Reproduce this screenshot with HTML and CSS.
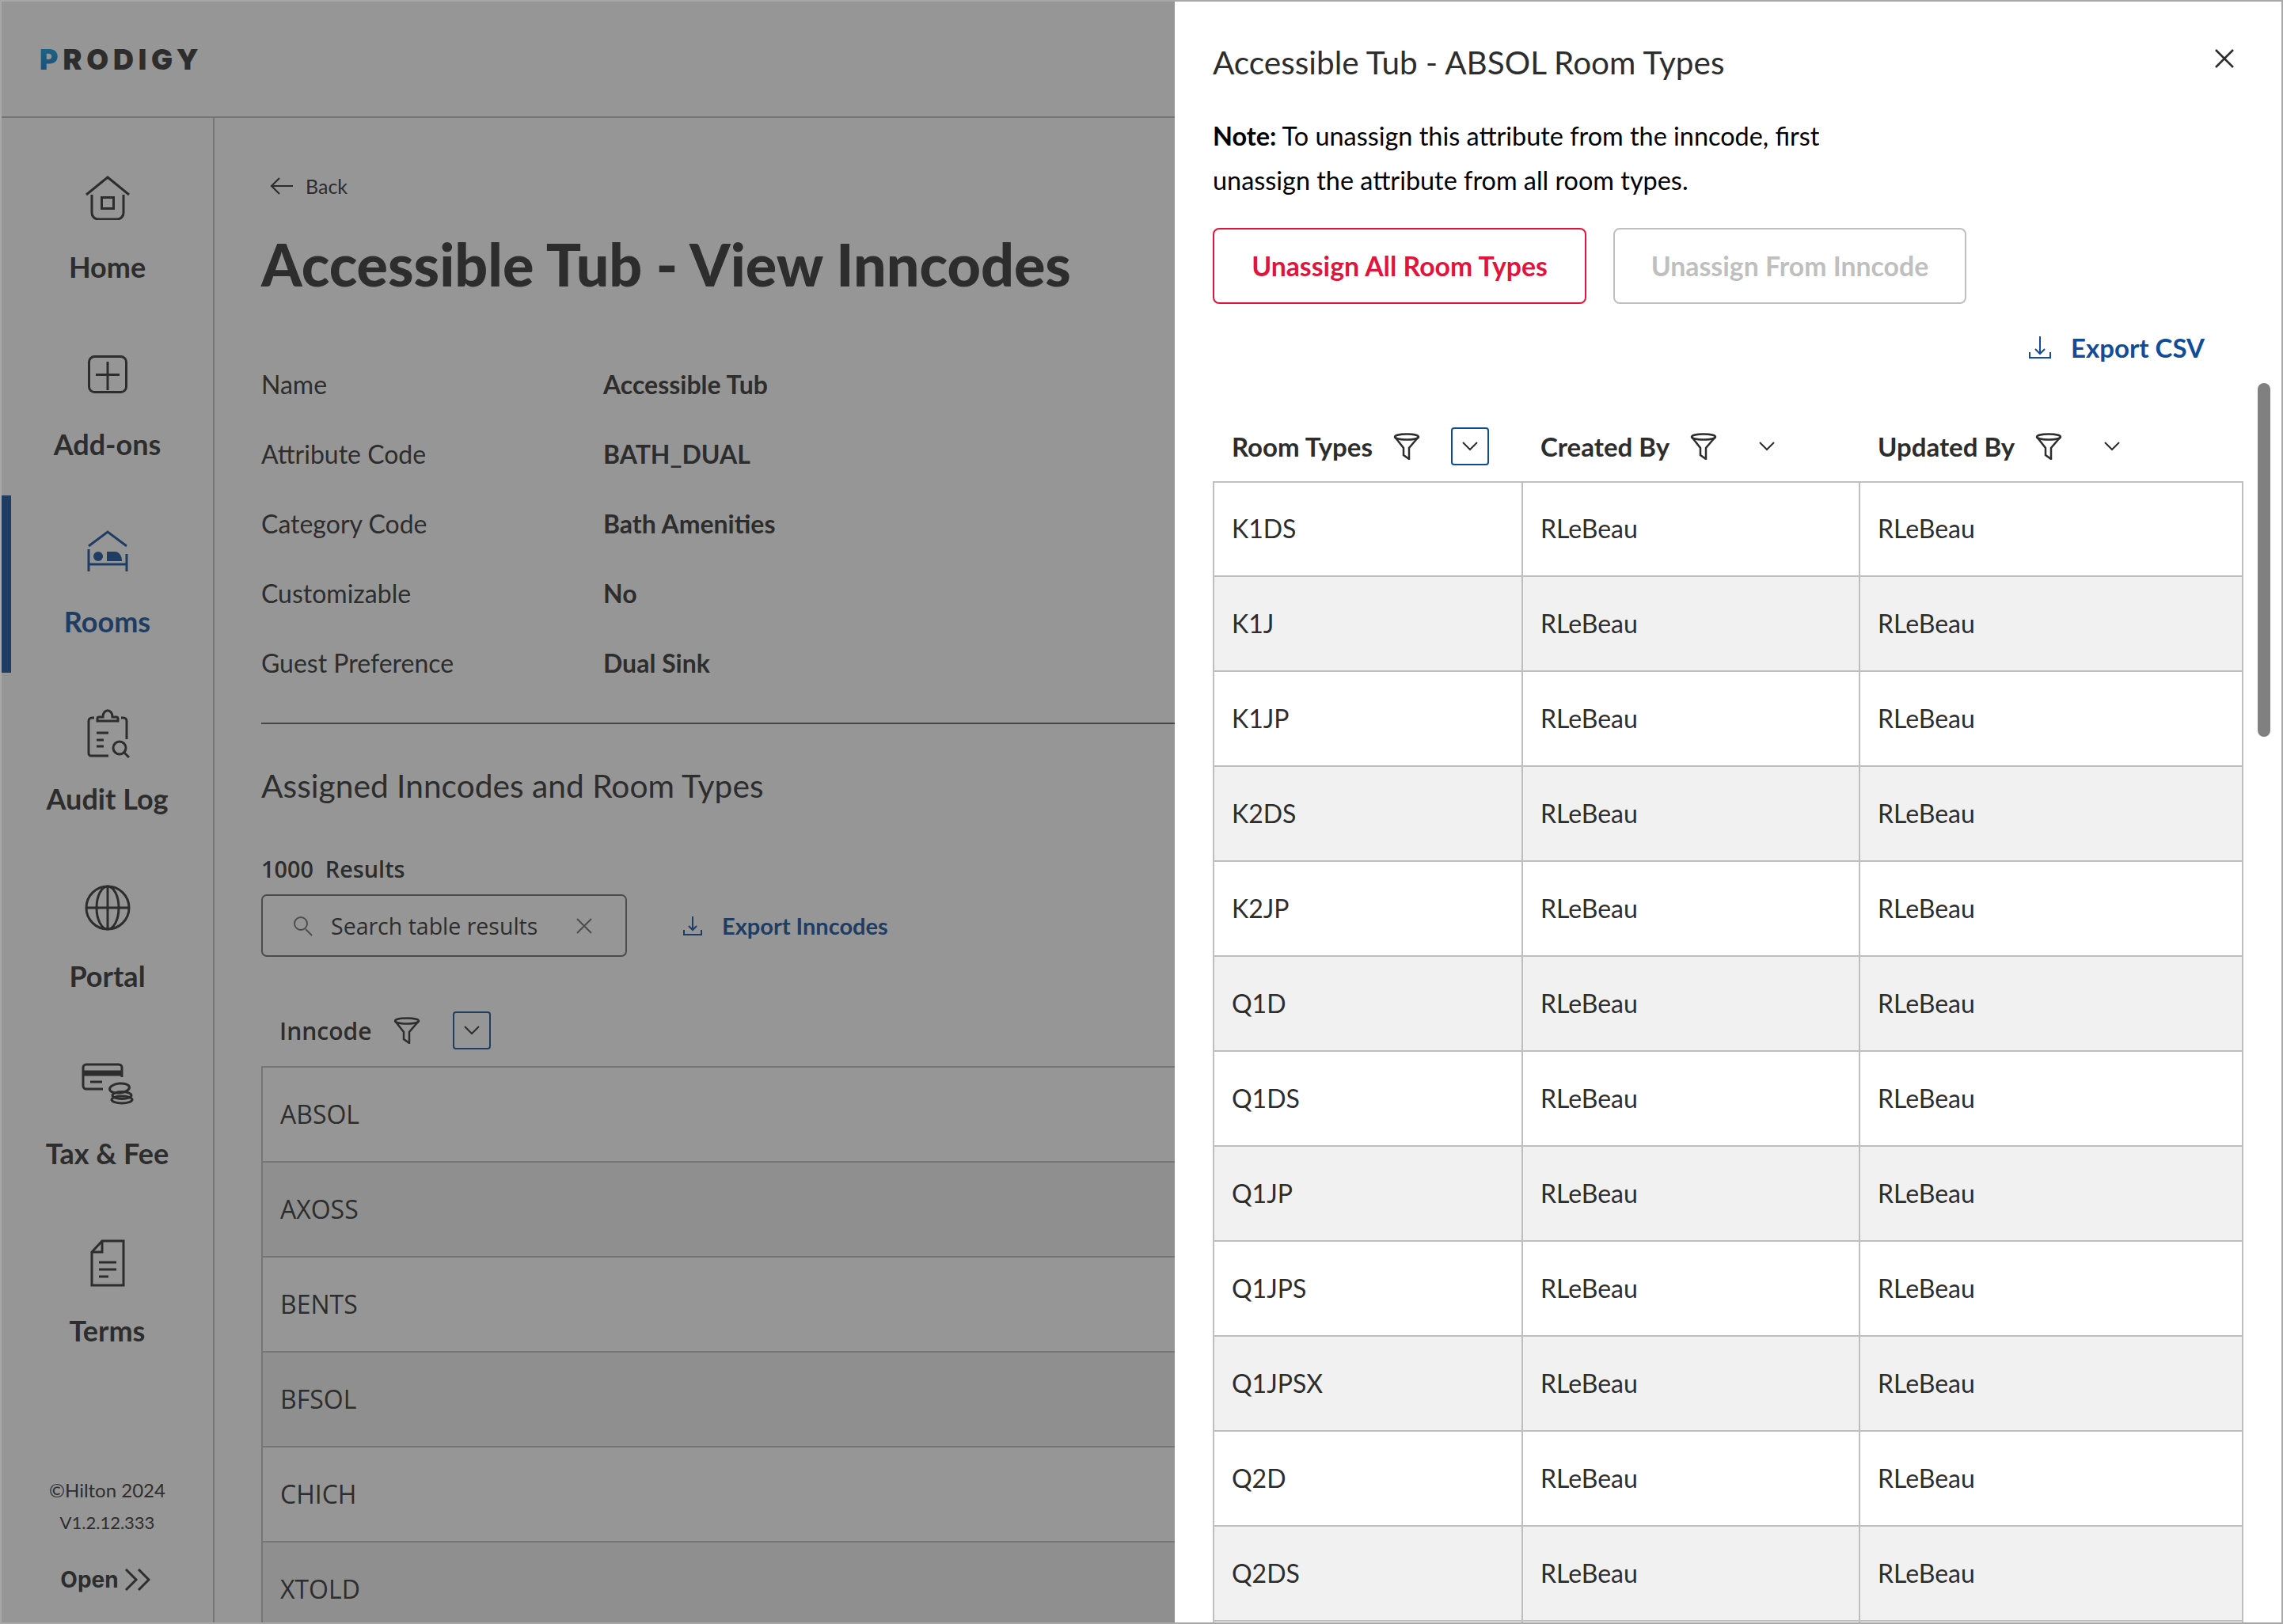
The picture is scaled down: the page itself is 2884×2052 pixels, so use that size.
FILE: index.html
```html
<!DOCTYPE html>
<html lang="en">
<head>
    <meta charset="UTF-8">
    <meta name="viewport" content="width=device-width, initial-scale=1.0">
    <title>Accessible Tub - View Inncodes</title>
    <link rel="stylesheet" href="styles.css">
</head>
<body>
    <div class="screen">
        <header class="topbar">
            <span class="logo"><span class="logo-p">P</span>RODIGY</span>
        </header>
        <div class="main">
            <nav class="sidebar">
                <div class="nav-list">
                    <a class="nav-item">
                        <span class="nav-icon">
                            <svg width="56" height="56" viewBox="0 0 56 56"><path d="M1 24 28 2l27 22"/><path d="M8 24v23a8 8 0 0 0 8 8h24a8 8 0 0 0 8-8V24"/><rect x="20.500" y="27.500" width="15" height="14"/></svg>
                        </span>
                        <span class="nav-label">Home</span>
                    </a>
                    <a class="nav-item">
                        <span class="nav-icon">
                            <svg width="56" height="56" viewBox="0 0 56 56"><rect x="4.500" y="4.500" width="47" height="45" rx="7"/><path d="M28 11v36M13 27.500h30"/></svg>
                        </span>
                        <span class="nav-label">Add-ons</span>
                    </a>
                    <a class="nav-item active">
                        <span class="nav-icon">
                            <svg width="56" height="56" viewBox="0 0 56 56"><path d="M4 20 28 2l24 18"/><path d="M4 24v28M52 30v22M4 43h48"/><circle class="solid" cx="16" cy="33" r="6"/><path class="solid" d="M27 27h10c6 0 9 6 9 12H27z"/></svg>
                        </span>
                        <span class="nav-label">Rooms</span>
                    </a>
                    <a class="nav-item">
                        <span class="nav-icon">
                            <svg width="56" height="64" viewBox="0 0 56 64"><path d="M11 13H8a4 4 0 0 0-4 4v41a3 3 0 0 0 3 3h22"/><path d="M45 13h3a4 4 0 0 1 4 4v23"/><path d="M15 17v-3a2 2 0 0 1 2-2h5c0-11 12-11 12 0h5a2 2 0 0 1 2 2v3z"/><path d="M14 32h15M14 41h9M14 49h9"/><circle cx="43" cy="51" r="8"/><path d="m49 57 6 6"/></svg>
                        </span>
                        <span class="nav-label">Audit Log</span>
                    </a>
                    <a class="nav-item">
                        <span class="nav-icon">
                            <svg width="58" height="58" viewBox="0 0 58 58"><circle cx="29" cy="29" r="27"/><ellipse cx="29" cy="29" rx="14" ry="27"/><path d="M29 2v54M2 29h54"/></svg>
                        </span>
                        <span class="nav-label">Portal</span>
                    </a>
                    <a class="nav-item">
                        <span class="nav-icon">
                            <svg width="66" height="56" viewBox="0 0 66 56"><path d="M27 34H6a4 4 0 0 1-4-4V7a4 4 0 0 1 4-4h41a4 4 0 0 1 4 4v12"/><path d="M2 14h49" stroke-width="7"/><path d="M11 25h15"/><ellipse cx="48" cy="33" rx="12.500" ry="6" transform="rotate(-6 48 33)"/><ellipse cx="51" cy="42" rx="12" ry="4.500"/><ellipse cx="51" cy="47.500" rx="13" ry="4.500"/></svg>
                        </span>
                        <span class="nav-label">Tax &amp; Fee</span>
                    </a>
                    <a class="nav-item">
                        <span class="nav-icon">
                            <svg width="44" height="60" viewBox="0 0 44 60"><path d="M15 2h27v56H2V16z"/><path d="M15 2v14H2"/><path d="M11 29h22M11 38h22M11 47h12"/></svg>
                        </span>
                        <span class="nav-label">Terms</span>
                    </a>
                </div>
                <div class="side-foot">
                    <p>©Hilton 2024</p>
                    <p class="version">V1.2.12.333</p>
                    <a class="open-link">Open
                        <svg width="32" height="28" viewBox="0 0 32 28"><path d="m1 1 13 13L1 27M17 1l13 13-13 13"/></svg>
                    </a>
                </div>
            </nav>
            <section class="content">
                <a class="back-link">
                    <svg width="30" height="24" viewBox="0 0 30 24"><path d="M12 2 2 12l10 10M2 12h27"/></svg>
                    Back
                </a>
                <h1>Accessible Tub - View Inncodes</h1>
                <dl class="details">
                    <div class="detail-row"><dt>Name</dt><dd>Accessible Tub</dd></div>
                    <div class="detail-row"><dt>Attribute Code</dt><dd>BATH_DUAL</dd></div>
                    <div class="detail-row"><dt>Category Code</dt><dd>Bath Amenities</dd></div>
                    <div class="detail-row"><dt>Customizable</dt><dd>No</dd></div>
                    <div class="detail-row"><dt>Guest Preference</dt><dd>Dual Sink</dd></div>
                </dl>
                <h3>Assigned Inncodes and Room Types</h3>
                <p class="results">1000&nbsp; Results</p>
                <div class="tools">
                    <div class="search">
                        <svg width="28" height="26" viewBox="0 0 28 26"><circle cx="11" cy="10" r="8"/><path d="m17 17 8 8"/></svg>
                        <span class="search-text">Search table results</span>
                        <svg class="search-clear" width="20" height="20" viewBox="0 0 20 20"><path d="m1 1 18 18M19 1 1 19"/></svg>
                    </div>
                    <a class="export small">
                        <svg width="26" height="26" viewBox="0 0 26 26"><path d="M13 1v17M8 13l5 5 5-5"/><path d="M2 18v6h22v-6"/></svg>
                        Export Inncodes
                    </a>
                </div>
                <div class="col-head inncode-head">
                    <span>Inncode</span>
                    <svg class="funnel" width="34" height="34" viewBox="0 0 34 34"><ellipse cx="17" cy="5" rx="15" ry="3.500"/><path d="M2 5l11 14v9l7 5V19L32 5"/></svg>
                    <span class="sort on"><svg width="20" height="12" viewBox="0 0 20 12"><path d="m1 1 9 9 9-9"/></svg></span>
                </div>
                <table class="inn-table">
                    <tr><td>ABSOL</td></tr>
                    <tr><td>AXOSS</td></tr>
                    <tr><td>BENTS</td></tr>
                    <tr><td>BFSOL</td></tr>
                    <tr><td>CHICH</td></tr>
                    <tr><td>XTOLD</td></tr>
                </table>
            </section>
        </div>
        <div class="overlay"></div>
        <aside class="drawer">
            <h2>Accessible Tub - ABSOL Room Types</h2>
            <svg class="drawer-close" width="24" height="24" viewBox="0 0 24 24"><path d="m1 1 22 22M23 1 1 23"/></svg>
            <p class="note"><b>Note:</b> To unassign this attribute from the inncode, first<br>unassign the attribute from all room types.</p>
            <div class="buttons">
                <button class="btn btn-danger">Unassign All Room Types</button>
                <button class="btn btn-off">Unassign From Inncode</button>
            </div>
            <div class="export-row">
                <a class="export">
                    <svg width="30" height="30" viewBox="0 0 30 30"><path d="M15 1v22M9 17l6 6 6-6"/><path d="M2 21v7h26v-7"/></svg>
                    Export CSV
                </a>
            </div>
            <table class="room-table">
                <colgroup><col class="col-a"><col class="col-b"><col class="col-c"></colgroup>
                <thead>
                    <tr>
                        <th><div class="col-head"><span>Room Types</span>
                            <svg class="funnel" width="34" height="34" viewBox="0 0 34 34"><ellipse cx="17" cy="5" rx="15" ry="3.500"/><path d="M2 5l11 14v9l7 5V19L32 5"/></svg>
                            <span class="sort on"><svg width="20" height="12" viewBox="0 0 20 12"><path d="m1 1 9 9 9-9"/></svg></span></div></th>
                        <th><div class="col-head"><span>Created By</span>
                            <svg class="funnel" width="34" height="34" viewBox="0 0 34 34"><ellipse cx="17" cy="5" rx="15" ry="3.500"/><path d="M2 5l11 14v9l7 5V19L32 5"/></svg>
                            <span class="sort"><svg width="20" height="12" viewBox="0 0 20 12"><path d="m1 1 9 9 9-9"/></svg></span></div></th>
                        <th><div class="col-head"><span>Updated By</span>
                            <svg class="funnel" width="34" height="34" viewBox="0 0 34 34"><ellipse cx="17" cy="5" rx="15" ry="3.500"/><path d="M2 5l11 14v9l7 5V19L32 5"/></svg>
                            <span class="sort"><svg width="20" height="12" viewBox="0 0 20 12"><path d="m1 1 9 9 9-9"/></svg></span></div></th>
                    </tr>
                </thead>
                <tbody>
                    <tr><td>K1DS</td><td>RLeBeau</td><td>RLeBeau</td></tr>
                    <tr><td>K1J</td><td>RLeBeau</td><td>RLeBeau</td></tr>
                    <tr><td>K1JP</td><td>RLeBeau</td><td>RLeBeau</td></tr>
                    <tr><td>K2DS</td><td>RLeBeau</td><td>RLeBeau</td></tr>
                    <tr><td>K2JP</td><td>RLeBeau</td><td>RLeBeau</td></tr>
                    <tr><td>Q1D</td><td>RLeBeau</td><td>RLeBeau</td></tr>
                    <tr><td>Q1DS</td><td>RLeBeau</td><td>RLeBeau</td></tr>
                    <tr><td>Q1JP</td><td>RLeBeau</td><td>RLeBeau</td></tr>
                    <tr><td>Q1JPS</td><td>RLeBeau</td><td>RLeBeau</td></tr>
                    <tr><td>Q1JPSX</td><td>RLeBeau</td><td>RLeBeau</td></tr>
                    <tr><td>Q2D</td><td>RLeBeau</td><td>RLeBeau</td></tr>
                    <tr><td>Q2DS</td><td>RLeBeau</td><td>RLeBeau</td></tr>
                    <tr><td></td><td></td><td></td></tr>
                </tbody>
            </table>
            <div class="scroll-thumb"></div>
        </aside>
    </div>
</body>
</html>
```

FILE: styles.css
```css
html, body {
    margin: 0;
    height: 100%;
}
body {
    font-family: "Lato", "Open Sans", sans-serif;
    color: #2d2d2d;
    background: #fff;
    overflow: hidden;
}
svg {
    fill: none;
    stroke: currentColor;
    stroke-width: 3;
    flex: none;
}
svg .solid {
    fill: currentColor;
    stroke: none;
}
.screen {
    position: relative;
    height: 2052px;
    box-sizing: border-box;
    border: 2px solid #a8a8a8;
    overflow: hidden;
}

/* top bar */
.topbar {
    height: 145px;
    border-bottom: 2px solid #bfbfbf;
    display: flex;
    align-items: center;
    padding-left: 48px;
}
.logo {
    font-family: "Inter", sans-serif;
    font-weight: 900;
    font-size: 36px;
    letter-spacing: 5.800px;
    line-height: 1;
}
.logo-p {
    background: linear-gradient(#06a8dc, #0d62c8);
    -webkit-background-clip: text;
    background-clip: text;
    color: transparent;
}

/* sidebar */
.main {
    display: flex;
    height: 1902px;
}
.sidebar {
    width: 267px;
    flex: none;
    border-right: 2px solid #bfbfbf;
    display: flex;
    flex-direction: column;
    justify-content: space-between;
    padding-top: 29px;
}
.nav-item {
    height: 224px;
    box-sizing: border-box;
    padding-top: 44px;
    display: flex;
    flex-direction: column;
    align-items: center;
    border-left: 12px solid transparent;
    margin-right: 12px;
}
.nav-item.active {
    border-left-color: #104c97;
    color: #104c97;
}
.nav-icon {
    height: 56px;
    display: flex;
    justify-content: center;
}
.nav-label {
    margin-top: 37px;
    font-size: 36px;
    line-height: 44px;
    font-weight: 700;
}
.side-foot {
    text-align: center;
    padding-bottom: 35px;
    font-size: 24px;
}
.side-foot p {
    margin: 0;
    line-height: 41px;
}
.side-foot .version {
    font-size: 22px;
}
.open-link {
    margin-top: 32px;
    height: 40px;
    padding-right: 5px;
    display: flex;
    align-items: center;
    justify-content: center;
    gap: 8px;
    font-family: "Inter", sans-serif;
    font-weight: 700;
    font-size: 28px;
}

/* page content */
.content {
    flex: 1;
    padding: 61px 0 0 59px;
    min-width: 0;
}
.back-link {
    display: flex;
    align-items: center;
    gap: 15px;
    height: 50px;
    padding-left: 11px;
    font-size: 25px;
}
.back-link svg {
    stroke-width: 2.200;
}
h1 {
    margin: 29px 0 0;
    font-size: 73.600px;
    line-height: 90px;
    font-weight: 900;
}
.details {
    margin: 62px 0 0;
    padding-bottom: 32px;
    border-bottom: 2px solid #5e5e5e;
}
.detail-row {
    display: flex;
    height: 88px;
    align-items: center;
    font-size: 32px;
}
.detail-row dt {
    width: 432px;
}
.detail-row dd {
    margin: 0;
    font-weight: 700;
}
h3 {
    margin: 50px 0 0;
    font-size: 40.700px;
    line-height: 56px;
    font-weight: 400;
}
.results {
    margin: 57px 0 0;
    font-family: "Open Sans", sans-serif;
    font-size: 28.800px;
    line-height: 40px;
    font-weight: 600;
}
.tools {
    display: flex;
    align-items: center;
    gap: 70px;
    margin-top: 12px;
}
.search {
    width: 462px;
    height: 79px;
    box-sizing: border-box;
    border: 2px solid #6b6b6b;
    border-radius: 7px;
    display: flex;
    align-items: center;
    padding-left: 37px;
    font-family: "Open Sans", sans-serif;
    font-size: 28.500px;
}
.search svg {
    stroke-width: 2;
    color: #6b6b6b;
}
.search-text {
    margin-left: 21px;
}
.search-clear {
    margin-left: 49px;
}
.export {
    display: inline-flex;
    align-items: center;
    gap: 24px;
    color: #104c97;
    font-size: 33px;
    font-weight: 700;
}
.export svg {
    stroke-width: 2;
}
.export.small {
    font-size: 29px;
}

/* tables */
.col-head {
    display: flex;
    align-items: center;
    gap: 26px;
    font-size: 33px;
    font-weight: 700;
}
.funnel {
    stroke-width: 2.500;
}
.sort {
    width: 48px;
    height: 48px;
    box-sizing: border-box;
    border: 2px solid transparent;
    border-radius: 4px;
    display: flex;
    align-items: center;
    justify-content: center;
    margin-left: 13px;
}
.sort svg {
    stroke-width: 2;
}
.sort.on {
    border-color: #104c97;
}
.inncode-head {
    height: 48px;
    margin-top: 69px;
    padding-left: 23px;
    gap: 28px;
    font-family: "Open Sans", sans-serif;
    font-weight: 600;
    font-size: 30px;
}
.inn-table {
    width: 1300px;
    margin-top: 21px;
    border-collapse: collapse;
}
.inn-table td {
    height: 120px;
    box-sizing: border-box;
    padding: 0 24px 2px 22px;
    border: 2px solid #bfbfbf;
    font-family: "Open Sans", sans-serif;
    font-size: 32px;
}
.inn-table tr:nth-child(even) td,
.room-table tbody tr:nth-child(even) td {
    background: #f1f1f1;
}

/* overlay and drawer */
.overlay {
    position: absolute;
    inset: -2px;
    background: rgba(45, 45, 45, 0.5);
}
.drawer {
    position: absolute;
    top: -2px;
    right: -2px;
    bottom: -2px;
    width: 1400px;
    box-sizing: border-box;
    background: #fff;
    border: 2px solid #5e5e5e;
    border-left: 0;
    padding: 53px 0 0 48px;
    overflow: hidden;
}
.drawer h2 {
    margin: 0;
    font-size: 40.500px;
    line-height: 48px;
    font-weight: 400;
}
.drawer-close {
    position: absolute;
    top: 60px;
    right: 60px;
    stroke-width: 2.500;
}
.note {
    margin: 41px 0 0;
    font-size: 32.400px;
    line-height: 56px;
    color: #000;
}
.buttons {
    display: flex;
    gap: 34px;
    margin-top: 32px;
}
.btn {
    height: 96px;
    box-sizing: border-box;
    background: #fff;
    border-radius: 8px;
    font-family: inherit;
    font-size: 33.800px;
    font-weight: 700;
    padding: 0;
}
.btn-danger {
    width: 472px;
    border: 2px solid #e0143c;
    color: #e0143c;
}
.btn-off {
    width: 446px;
    border: 2px solid #bfbfbf;
    color: #bfbfbf;
}
.export-row {
    display: flex;
    justify-content: flex-end;
    width: 1253px;
    height: 40px;
    margin-top: 35px;
}
.room-table {
    width: 1302px;
    table-layout: fixed;
    margin-top: 61px;
    border-collapse: collapse;
}
.col-a {
    width: 390px;
}
.col-b {
    width: 426px;
}
.room-table th {
    height: 88px;
    padding: 0 0 0 23px;
    text-align: left;
}
.room-table td {
    height: 120px;
    box-sizing: border-box;
    padding: 0 24px 2px 22px;
    border: 2px solid #bfbfbf;
    font-size: 32px;
}
.room-table tbody tr:first-child td {
    height: 119px;
}
.scroll-thumb {
    position: absolute;
    top: 482px;
    right: 14px;
    width: 16px;
    height: 447px;
    border-radius: 8px;
    background: #808080;
}
```
